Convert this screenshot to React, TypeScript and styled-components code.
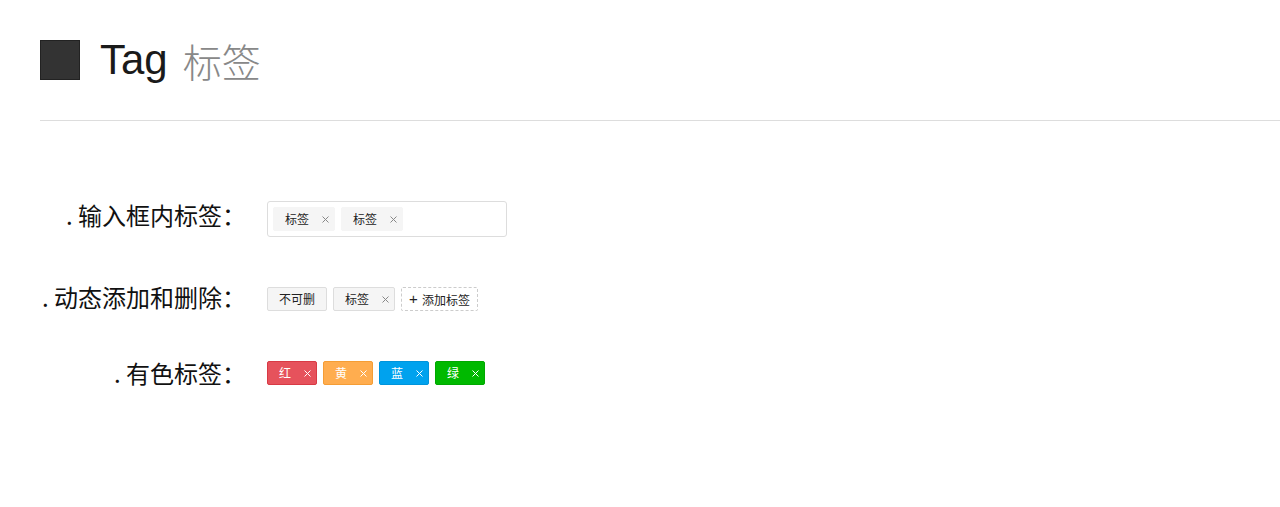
import {FC, useState} from 'react';
import styled, {createGlobalStyle, css} from 'styled-components';

const GlobalStyle = createGlobalStyle`
  html, body {
    margin: 0;
    padding: 0;
    background: #fff;
  }

  body {
    font-family: "Noto Sans CJK SC", "Liberation Sans", sans-serif;
    color: #222;
  }
`;

const Page = styled.div`
  width: 1280px;
`;

const Header = styled.header`
  display: flex;
  align-items: center;
  gap: 20px;

  height: 40px;
  margin-left: 40px;
  padding: 40px 0;

  border-bottom: 1px solid #ddd;
`;

const Block = styled.span`
  width: 38px;
  height: 38px;

  background: #333;
  border: 1px solid #222;
`;

const Title = styled.h1`
  display: flex;
  align-items: center;
  gap: 15px;

  height: 40px;
  margin: 0;

  font-family: "Liberation Sans", "Noto Sans CJK SC", sans-serif;
  font-size: 42px;
  font-weight: 400;
  line-height: 40px;

  color: #1a1a1a;

  span {
    font-family: "Noto Sans CJK SC", sans-serif;
    font-size: 39px;
    font-weight: 300;
    color: #888;
  }
`;

const Body = styled.section`
  padding-top: 80px;
`;

const Row = styled.div<{$gap: number}>`
  display: grid;
  grid-template-columns: 246px auto;
  column-gap: 21px;
  align-items: center;

  margin-bottom: ${p => p.$gap}px;
`;

const Label = styled.div<{$lift?: number}>`
  text-align: right;

  font-size: 24px;
  line-height: 36px;

  color: #111;

  transform: translateY(${p => -(p.$lift ?? 0)}px);
`;

const Field = styled.div`
  display: flex;
  align-items: center;
  gap: 6px;

  width: 228px;
  height: 34px;
  padding: 0 5px;

  border: 1px solid #ddd;
  border-radius: 3px;
`;

const TagList = styled.div`
  display: flex;
  align-items: center;
  gap: 6px;
`;

type Tone = 'plain' | 'soft' | 'red' | 'yellow' | 'blue' | 'green';

const tones: Record<Tone, {bg: string; border: string; color: string; close: string}> = {
  plain: {bg: '#f5f5f5', border: '#ddd', color: '#222', close: '#888'},
  soft: {bg: '#f5f5f5', border: '#f5f5f5', color: '#222', close: '#888'},
  red: {bg: '#e6525c', border: '#d83a45', color: '#fff', close: '#fff'},
  yellow: {bg: '#ffad4f', border: '#f59d35', color: '#fff', close: '#fff'},
  blue: {bg: '#00a2ee', border: '#0094db', color: '#fff', close: '#fff'},
  green: {bg: '#00b900', border: '#00a800', color: '#fff', close: '#fff'},
};

const TagBox = styled.span<{$tone: Tone; $closable: boolean}>`
  display: inline-flex;
  align-items: center;
  gap: 12px;
  box-sizing: border-box;

  height: 24px;
  padding: ${p => (p.$closable ? '0 5px 0 11px' : '0 11px')};

  font-size: 12px;
  line-height: 22px;

  border-radius: 2px;

  ${p => css`
    background: ${tones[p.$tone].bg};
    border: 1px solid ${tones[p.$tone].border};
    color: ${tones[p.$tone].color};
  `}
`;

const Close = styled.button<{$color: string}>`
  display: inline-flex;
  align-items: center;
  justify-content: center;

  width: 8px;
  height: 8px;
  padding: 0;

  background: none;
  border: 0;
  cursor: pointer;

  color: ${p => p.$color};
`;

const AddTag = styled.button`
  display: inline-flex;
  align-items: center;
  box-sizing: border-box;

  height: 24px;
  padding: 0 7px;

  font-family: "Noto Sans CJK SC", sans-serif;
  font-size: 12px;

  background: #fff;
  border: 1px dashed #ccc;
  border-radius: 2px;
  color: #222;
  cursor: pointer;
`;

const Plus = styled.span`
  width: 13px;

  font-family: "Liberation Sans", sans-serif;
  font-size: 15px;
  font-weight: 400;
  line-height: 22px;
  text-align: left;
`;

const CloseIcon: FC = () => (
  <svg width="7" height="7" viewBox="0 0 7 7" fill="none">
    <path d="M0.5 0.5 L6.5 6.5 M6.5 0.5 L0.5 6.5" stroke="currentColor" strokeWidth="1" />
  </svg>
);

type TagProps = {
  label: string;
  tone: Tone;
  closable?: boolean;
  onClose?: () => void;
};

const Tag: FC<TagProps> = ({label, tone, closable = true, onClose}) => (
  <TagBox $tone={tone} $closable={closable}>
    {label}
    {closable && (
      <Close $color={tones[tone].close} onClick={onClose} aria-label="删除">
        <CloseIcon />
      </Close>
    )}
  </TagBox>
);

const App: FC = () => {
  const [inputTags, setInputTags] = useState(['标签', '标签']);
  const [dynTags, setDynTags] = useState(['标签']);
  const [colors, setColors] = useState<{label: string; tone: Tone}[]>([
    {label: '红', tone: 'red'},
    {label: '黄', tone: 'yellow'},
    {label: '蓝', tone: 'blue'},
    {label: '绿', tone: 'green'},
  ]);

  return (
    <Page>
      <GlobalStyle />
      <Header>
        <Block />
        <Title>
          Tag <span>标签</span>
        </Title>
      </Header>
      <Body>
        <Row $gap={44}>
          <Label $lift={4}>. 输入框内标签：</Label>
          <Field>
            {inputTags.map((t, i) => (
              <Tag
                key={i}
                label={t}
                tone="soft"
                onClose={() => setInputTags(inputTags.filter((_, j) => j !== i))}
              />
            ))}
          </Field>
        </Row>
        <Row $gap={38}>
          <Label $lift={2}>. 动态添加和删除：</Label>
          <TagList>
            <Tag label="不可删" tone="plain" closable={false} />
            {dynTags.map((t, i) => (
              <Tag
                key={i}
                label={t}
                tone="plain"
                onClose={() => setDynTags(dynTags.filter((_, j) => j !== i))}
              />
            ))}
            <AddTag onClick={() => setDynTags([...dynTags, '标签'])}>
              <Plus>+</Plus>添加标签
            </AddTag>
          </TagList>
        </Row>
        <Row $gap={0}>
          <Label>. 有色标签：</Label>
          <TagList>
            {colors.map((c, i) => (
              <Tag
                key={c.label}
                label={c.label}
                tone={c.tone}
                onClose={() => setColors(colors.filter((_, j) => j !== i))}
              />
            ))}
          </TagList>
        </Row>
      </Body>
    </Page>
  );
};

export default App;
